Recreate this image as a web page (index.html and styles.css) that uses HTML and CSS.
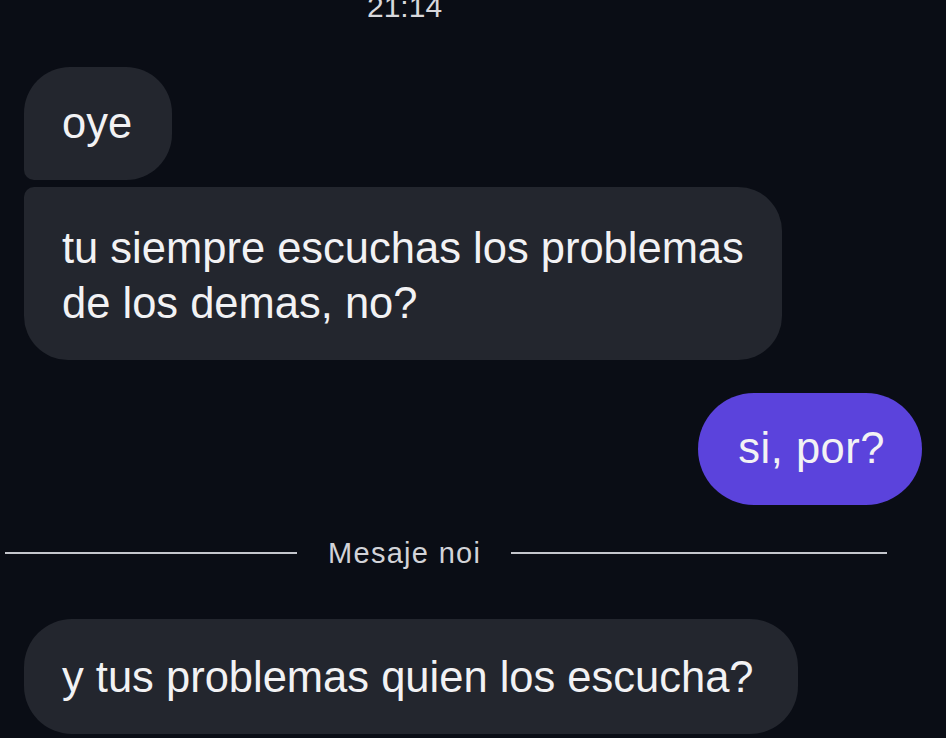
FILE: index.html
```html
<!DOCTYPE html>
<html lang="es">
<head>
  <meta charset="UTF-8" />
  <meta name="viewport" content="width=device-width, initial-scale=1" />
  <title>Chat</title>
  <link rel="stylesheet" href="styles.css">
</head>
<body>
  <div class="chat">
    <!-- Hora del grupo de mensajes -->
    <div class="time">21:14</div>

    <!-- Mensajes recibidos -->
    <div class="row">
      <div class="bubble in first">oye</div>
    </div>
    <div class="row">
      <div class="bubble in last">tu siempre escuchas los problemas<br>de los demas, no?</div>
    </div>

    <!-- Mensaje enviado -->
    <div class="row out-row">
      <div class="bubble out">si, por?</div>
    </div>

    <!-- Separador de mensajes nuevos -->
    <div class="divider">
      <span class="line line-left"></span>
      <span class="divider-text">Mesaje noi</span>
      <span class="line line-right"></span>
    </div>

    <div class="row">
      <div class="bubble in single">y tus problemas quien los escucha?</div>
    </div>
  </div>
</body>
</html>
```

FILE: styles.css
```css
/* ===== General ===== */
html, body {
  margin: 0;
  padding: 0;
  height: 100%;
  overflow: hidden;
}
body {
  background-color: #0a0d15;
  font-family: "Liberation Sans", Arial, sans-serif;
  color: #f2f2f4;
}
.chat {
  display: flex;
  flex-direction: column;
  padding: 0 24px;
}

/* ===== Hora ===== */
.time {
  margin-top: -8px;
  padding-left: 343px;
  font-size: 30px;
  line-height: 30px;
  color: #d8d8dc;
}

/* ===== Burbujas ===== */
.row {
  display: flex;
}
.out-row {
  justify-content: flex-end;
  margin-top: 33px;
}
.bubble {
  font-size: 43.5px;
  line-height: 55px;
  padding: 31px 38px 31px 38px;
  white-space: nowrap;
}
.bubble.in {
  background-color: #23262e;
}
.bubble.first {
  margin-top: 45px;
  padding: 29px 40px 29px 38px;
  border-radius: 46px 46px 46px 10px;
}
.bubble.last {
  margin-top: 7px;
  padding-top: 34px;
  padding-bottom: 29px;
  border-radius: 10px 44px 44px 44px;
}
.bubble.single {
  margin-top: 48px;
  padding: 31px 44px 29px 38px;
  border-radius: 48px;
}
.bubble.out {
  background-color: #5b43dc;
  padding: 28px 37px 29px 40px;
  border-radius: 56px;
  letter-spacing: 0.5px;
}

/* ===== Separador ===== */
.divider {
  display: flex;
  align-items: center;
  margin: 30px 35px 0 -19px;
  height: 36px;
}
.line {
  height: 2px;
  background-color: #c4c6cc;
}
.line-left {
  width: 292px;
}
.line-right {
  flex: 1;
}
.divider-text {
  padding: 0 30px 0 31px;
  font-size: 29px;
  letter-spacing: 1.3px;
  color: #d2d3d8;
}
```
